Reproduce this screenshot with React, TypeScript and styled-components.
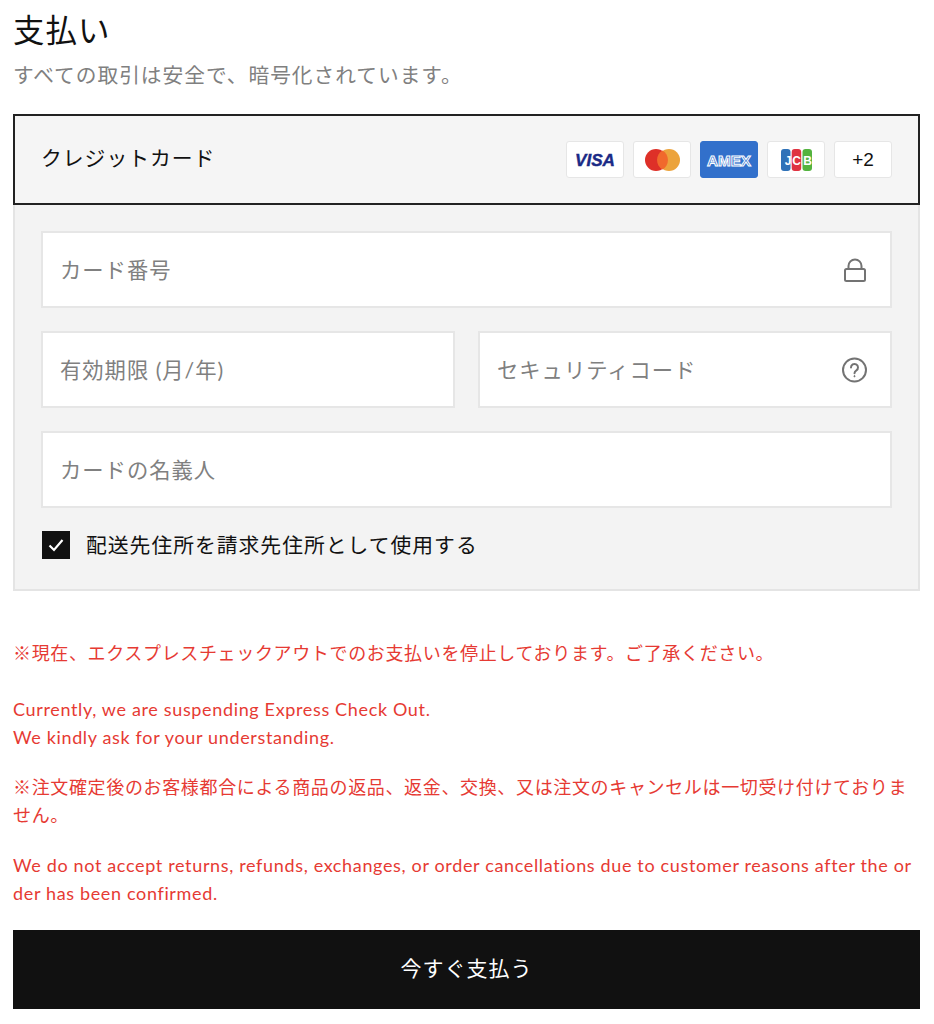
import React from 'react';
import styled, { createGlobalStyle } from 'styled-components';

const GlobalStyle = createGlobalStyle`
  body {
    margin: 0;
    background: #fff;
    font-family: 'Lato', 'Noto Sans CJK JP', sans-serif;
    color: #111;
  }
`;

const Page = styled.div`
  width: 907px;
  margin-left: 13px;
`;

const Title = styled.h1`
  margin: 0;
  height: 60px;
  font-size: 31.5px;
  font-weight: 400;
  line-height: 60px;
  letter-spacing: 1px;
`;

const Subtitle = styled.p`
  margin: 0 0 24px;
  height: 30px;
  font-size: 20.7px;
  line-height: 30px;
  letter-spacing: 1px;
  color: #808080;
`;

const MethodHeader = styled.div`
  display: flex;
  align-items: center;
  justify-content: space-between;
  box-sizing: border-box;
  height: 91px;
  padding: 0 26px;
  border: 2px solid #222;
  background: #f5f5f5;
`;

const MethodName = styled.span`
  margin-bottom: 6px;
  font-size: 20.8px;
  letter-spacing: 1px;
  color: #111;
`;

const Badges = styled.div`
  display: flex;
  gap: 9px;
`;

const Badge = styled.div<{ $fill?: string }>`
  display: flex;
  align-items: center;
  justify-content: center;
  box-sizing: border-box;
  width: 58px;
  height: 37px;
  border: 1px solid ${(p) => p.$fill ?? '#e6e6e6'};
  border-radius: 3px;
  background: ${(p) => p.$fill ?? '#fff'};
  font-family: 'Liberation Sans', sans-serif;
  font-size: 19px;
  color: #111;
`;

const FormPanel = styled.div`
  display: flex;
  flex-direction: column;
  gap: 23px;
  box-sizing: border-box;
  height: 386px;
  padding: 26px 26px 0;
  border: 2px solid #e4e4e4;
  border-top: 0;
  background: #f3f3f3;
`;

const FieldRow = styled.div`
  display: flex;
  gap: 23px;
`;

const Field = styled.div`
  display: flex;
  flex: 1 1 auto;
  align-items: center;
  justify-content: space-between;
  box-sizing: border-box;
  width: 100%;
  min-height: 77px;
  max-height: 77px;
  padding: 0 22px 0 17px;
  border: 2px solid #e6e6e6;
  background: #fff;
`;

const Placeholder = styled.span`
  margin-bottom: 3px;
  font-size: 21.3px;
  letter-spacing: 1px;
  color: #808080;
`;

const CheckRow = styled.label`
  display: flex;
  align-items: center;
  gap: 16px;
  height: 28px;
  font-size: 20.8px;
  letter-spacing: 1px;
  color: #111;
`;

const CheckBox = styled.span`
  display: flex;
  align-items: center;
  justify-content: center;
  margin-left: 1px;
  width: 28px;
  height: 28px;
  background: #111;
`;

const CheckLabel = styled.span`
  margin-bottom: 3px;
`;

const Notices = styled.div`
  padding-top: 48px;
  color: #e63a33;
  font-size: 18px;
  line-height: 28px;
  letter-spacing: 0.65px;
  word-break: break-all;
`;

const Notice = styled.p<{ $gap: number }>`
  margin: 0 0 ${(p) => p.$gap}px;
`;

const PayButton = styled.button`
  display: block;
  width: 100%;
  height: 79px;
  margin-top: 23px;
  padding: 0 0 5px;
  border: 0;
  background: #111;
  color: #fff;
  font-family: inherit;
  font-size: 21px;
  letter-spacing: 1px;
`;

function VisaLogo() {
  return (
    <svg width="46" height="18" viewBox="0 0 46 18">
      <text x="23" y="15" textAnchor="middle" textLength="40" lengthAdjust="spacingAndGlyphs" fontFamily="Liberation Sans" fontSize="17" fontWeight="700" fontStyle="italic" fill="#1a2a86" stroke="#1a2a86" strokeWidth="0.4">
        VISA
      </text>
    </svg>
  );
}

function MasterLogo() {
  return (
    <svg width="35" height="22" viewBox="0 0 35 22">
      <circle cx="11" cy="11" r="11" fill="#de3028" />
      <circle cx="24" cy="11" r="11" fill="#eca33c" />
      <path d="M17.5 1.5a11 11 0 0 1 0 19a11 11 0 0 1 0-19z" fill="#f1692c" />
    </svg>
  );
}

function AmexLogo() {
  return (
    <svg width="50" height="18" viewBox="0 0 50 18">
      <text x="25" y="14.5" textAnchor="middle" textLength="44" lengthAdjust="spacingAndGlyphs" fontFamily="Liberation Sans" fontSize="15" fontWeight="700" fill="#3270cb" stroke="#fff" strokeWidth="1">
        AMEX
      </text>
    </svg>
  );
}

function JcbLogo() {
  return (
    <svg width="31" height="22" viewBox="0 0 31 22">
      <rect x="0" width="9.5" height="22" rx="3" fill="#2f72b8" />
      <rect x="10.7" width="9.5" height="22" rx="3" fill="#df3341" />
      <rect x="21.5" width="9.5" height="22" rx="3" fill="#54b33f" />
      <text x="7" y="15.5" textAnchor="middle" fontFamily="Liberation Sans" fontSize="12" fontWeight="700" fill="#fff">J</text>
      <text x="15.5" y="15.5" textAnchor="middle" fontFamily="Liberation Sans" fontSize="12" fontWeight="700" fill="#fff">C</text>
      <text x="26.5" y="15.5" textAnchor="middle" fontFamily="Liberation Sans" fontSize="12" fontWeight="700" fill="#fff">B</text>
    </svg>
  );
}

function LockIcon() {
  return (
    <svg width="24" height="26" viewBox="0 0 24 26" fill="none" stroke="#737373" strokeWidth="2">
      <rect x="1" y="12" width="20" height="12" rx="1.5" />
      <path d="M4.5 12V9a6.5 6.5 0 0 1 13 0v3" />
    </svg>
  );
}

function HelpIcon() {
  return (
    <svg width="26" height="26" viewBox="0 0 26 26" fill="none" stroke="#737373" strokeWidth="2">
      <circle cx="12.5" cy="13" r="11.5" />
      <path d="M9 10.5a3.5 3.5 0 1 1 5.4 2.9c-1.2.8-1.9 1.4-1.9 2.8" strokeLinecap="round" />
      <circle cx="12.5" cy="19.2" r="0.6" fill="#737373" strokeWidth="1" />
    </svg>
  );
}

export default function App() {
  return (
    <Page>
      <GlobalStyle />
      <Title>支払い</Title>
      <Subtitle>すべての取引は安全で、暗号化されています。</Subtitle>
      <MethodHeader>
        <MethodName>クレジットカード</MethodName>
        <Badges>
          <Badge><VisaLogo /></Badge>
          <Badge><MasterLogo /></Badge>
          <Badge $fill="#3270cb"><AmexLogo /></Badge>
          <Badge><JcbLogo /></Badge>
          <Badge>+2</Badge>
        </Badges>
      </MethodHeader>
      <FormPanel>
        <Field>
          <Placeholder>カード番号</Placeholder>
          <LockIcon />
        </Field>
        <FieldRow>
          <Field><Placeholder>有効期限 (月/年)</Placeholder></Field>
          <Field>
            <Placeholder>セキュリティコード</Placeholder>
            <HelpIcon />
          </Field>
        </FieldRow>
        <Field><Placeholder>カードの名義人</Placeholder></Field>
        <CheckRow>
          <CheckBox>
            <svg width="16" height="14" viewBox="0 0 16 14" fill="none" stroke="#fff" strokeWidth="2.2">
              <path d="M1.5 7.5l4.5 4.5L14.5 2" />
            </svg>
          </CheckBox>
          <CheckLabel>配送先住所を請求先住所として使用する</CheckLabel>
        </CheckRow>
      </FormPanel>
      <Notices>
        <Notice $gap={28}>※現在、エクスプレスチェックアウトでのお支払いを停止しております。ご了承ください。</Notice>
        <Notice $gap={22}>Currently, we are suspending Express Check Out.<br />We kindly ask for your understanding.</Notice>
        <Notice $gap={22}>※注文確定後のお客様都合による商品の返品、返金、交換、又は注文のキャンセルは一切受け付けておりません。</Notice>
        <Notice $gap={0}>We do not accept returns, refunds, exchanges, or order cancellations due to customer reasons after the order has been confirmed.</Notice>
      </Notices>
      <PayButton>今すぐ支払う</PayButton>
    </Page>
  );
}
